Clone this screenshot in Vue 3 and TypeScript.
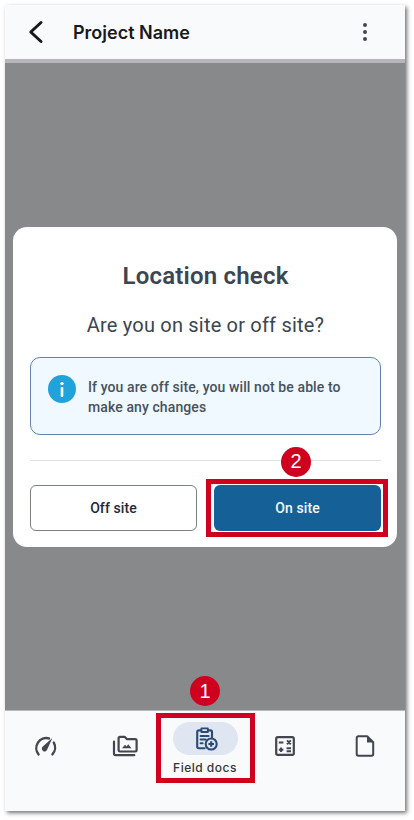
<template>
  <div class="page">
    <div class="screen">
      <header class="top-bar">
        <button class="icon-btn back" aria-label="Back">
          <svg width="24" height="24" viewBox="0 0 24 24" fill="none">
            <path d="M17 2.5 6.8 12 17 21.5" stroke="#17191c" stroke-width="3" stroke-linecap="round" stroke-linejoin="round" />
          </svg>
        </button>
        <h1 class="project">Project Name</h1>
        <button class="icon-btn more" aria-label="More">
          <span class="dot"></span><span class="dot"></span><span class="dot"></span>
        </button>
      </header>
      <div class="strip"></div>

      <main class="overlay">
        <section class="modal">
          <h2 class="modal-title">Location check</h2>
          <p class="question">Are you on site or off site?</p>
          <div class="info">
            <svg class="info-icon" width="30" height="30" viewBox="0 0 30 30">
              <circle cx="15" cy="15" r="14" fill="#22a2da" />
              <circle cx="15" cy="9.6" r="1.7" fill="#fff" />
              <rect x="13.7" y="13" width="2.6" height="10" rx="1" fill="#fff" />
            </svg>
            <p class="info-text">If you are off site, you will not be able to make any changes</p>
          </div>
          <div class="divider"></div>
          <div class="actions">
            <button class="btn secondary">Off site</button>
            <button class="btn primary">On site</button>
          </div>
          <div class="frame frame-on-site"></div>
          <span class="step step-two">2</span>
        </section>
      </main>

      <nav class="bottom-nav">
        <button v-for="item in navItems" :key="item.id" class="nav-item" :class="{ active: item.label }">
          <span class="pill">
            <svg v-if="item.id === 'gauge'" width="26" height="26" viewBox="0 0 26 26" fill="none">
              <path d="M6.6 21.4a10 10 0 0 1 10.4-16" stroke="#43454f" stroke-width="2.4" stroke-linecap="round" />
              <path d="M21.8 9.6a10 10 0 0 1-1.4 11.8" stroke="#43454f" stroke-width="2.4" stroke-linecap="round" />
              <path d="M20.4 5 15.4 16a2.8 2.8 0 1 1-4-2.9z" fill="#43454f" />
            </svg>
            <svg v-else-if="item.id === 'photos'" width="26" height="26" viewBox="0 0 26 26" fill="none">
              <path d="M2 8.5v12c0 1 .7 1.7 1.7 1.7h18.6" stroke="#43454f" stroke-width="2.2" stroke-linecap="round" />
              <path d="M6.6 5.2c0-.8.6-1.4 1.4-1.4h4.6l2.2 2.3h8.4c.8 0 1.4.6 1.4 1.4v9.6c0 .8-.6 1.4-1.4 1.4H8c-.8 0-1.4-.6-1.4-1.4z" stroke="#43454f" stroke-width="2.2" stroke-linejoin="round" />
              <path d="m10 15.2 3-3.4 1.6 1.7 1.6-2.3 3.3 4z" fill="#43454f" />
            </svg>
            <svg v-else-if="item.id === 'docs'" width="26" height="26" viewBox="0 0 26 26" fill="none">
              <path d="M12.6 22.2H6.8c-.9 0-1.6-.7-1.6-1.6V6c0-.9.7-1.6 1.6-1.6h11.6c.9 0 1.6.7 1.6 1.6v5.2" stroke="#2b4a75" stroke-width="2.1" stroke-linecap="round" />
              <path d="M9.4 2.4h6.4v3.6H9.4z" fill="#dfe5f1" stroke="#2b4a75" stroke-width="1.9" stroke-linejoin="round" />
              <path d="M8.6 10h8M8.6 13.6h5M8.6 17.2h2" stroke="#2b4a75" stroke-width="2" stroke-linecap="round" />
              <circle cx="19.2" cy="18" r="5.5" fill="#dfe5f1" stroke="#2b4a75" stroke-width="2.1" />
              <path d="M19.2 15.2v5.6M16.4 18h5.6" stroke="#2b4a75" stroke-width="2.2" />
            </svg>
            <svg v-else-if="item.id === 'calc'" width="26" height="26" viewBox="0 0 26 26" fill="none">
              <rect x="4.2" y="4.2" width="17.6" height="17.6" rx="1.6" stroke="#43454f" stroke-width="2.2" />
              <path d="M6.8 9.5h4.6M15 7.4l3.8 3.8M18.8 7.4 15 11.2M6.8 16.7h4.6M9.1 14.4V19M14.6 15.3h4.4M14.6 18.2h4.4" stroke="#43454f" stroke-width="2" />
            </svg>
            <svg v-else width="26" height="26" viewBox="0 0 26 26" fill="none">
              <path d="M6.4 3.3h8.8l6 6V21c0 1-.7 1.7-1.7 1.7H6.4c-1 0-1.7-.7-1.7-1.7V5c0-1 .7-1.7 1.7-1.7z" stroke="#43454f" stroke-width="2" stroke-linejoin="round" />
              <path d="M15 3.4v6h6.2z" fill="#43454f" />
            </svg>
          </span>
          <span v-if="item.label" class="nav-label">{{ item.label }}</span>
        </button>
        <div class="frame frame-docs"></div>
        <span class="step step-one">1</span>
      </nav>
    </div>
  </div>
</template>

<script setup lang="ts">
const navItems: { id: string; label?: string }[] = [
  { id: 'gauge' },
  { id: 'photos' },
  { id: 'docs', label: 'Field docs' },
  { id: 'calc' },
  { id: 'file' },
]
</script>

<style scoped>
.page {
  width: 414px;
  height: 820px;
  box-sizing: border-box;
  padding: 5px 9px 9px 5px;
  background: #fff;
  font-family: Roboto, "Liberation Sans", sans-serif;
}

.screen {
  height: 806px;
  display: flex;
  flex-direction: column;
  box-shadow: 2px 2px 4px rgba(0, 0, 0, 0.55);
}

.top-bar {
  height: 54px;
  flex: none;
  display: flex;
  align-items: center;
  background: #f9fafc;
}

.icon-btn {
  border: none;
  background: none;
  padding: 0;
  display: flex;
}

.back {
  margin-left: 19px;
}

.project {
  margin: 0 0 0 25px;
  flex: 1;
  font-family: Inter, sans-serif;
  font-size: 18px;
  font-weight: 600;
  color: #17191c;
}

.more {
  flex-direction: column;
  gap: 3px;
  margin-right: 38px;
}

.dot {
  width: 4px;
  height: 4px;
  border-radius: 50%;
  background: #45474f;
}

.strip {
  height: 4px;
  flex: none;
  background: #b6b6bc;
}

.overlay {
  flex: 1;
  display: flex;
  align-items: center;
  justify-content: center;
  background: #88898b;
}

.modal {
  position: relative;
  width: 384px;
  height: 320px;
  box-sizing: border-box;
  padding: 33px 16px 0 17px;
  background: #fff;
  border-radius: 14px;
}

.modal-title {
  margin: 0;
  font-size: 24px;
  line-height: 32px;
  font-weight: 600;
  letter-spacing: 0.2px;
  text-align: center;
  color: #3a4651;
}

.question {
  margin: 19px 0 0;
  font-size: 20px;
  line-height: 28px;
  letter-spacing: 0.2px;
  text-align: center;
  color: #3a4651;
}

.info {
  margin-top: 18px;
  height: 78px;
  box-sizing: border-box;
  display: flex;
  align-items: center;
  gap: 11px;
  padding: 0 16px;
  background: #f0f9ff;
  border: 1px solid #6283ad;
  border-radius: 10px;
}

.info-icon {
  flex: none;
  align-self: flex-start;
  margin-top: 16px;
}

.info-text {
  margin: 0;
  padding-top: 3px;
  font-size: 14px;
  line-height: 20px;
  font-weight: 500;
  letter-spacing: 0.1px;
  color: #46525d;
}

.divider {
  height: 1px;
  margin-top: 25px;
  background: #dfe1e3;
}

.actions {
  display: flex;
  gap: 17px;
  margin-top: 24px;
}

.btn {
  flex: none;
  width: 167px;
  height: 46px;
  border-radius: 6px;
  font-family: inherit;
  font-size: 14px;
  font-weight: 500;
  letter-spacing: 0.1px;
}

.btn.secondary {
  background: #fff;
  border: 1px solid #7b8288;
  color: #1f2933;
}

.btn.primary {
  background: #156197;
  border: none;
  color: #f3f8fc;
}

.frame {
  position: absolute;
  box-sizing: border-box;
  border: 5px solid #d0011f;
}

.frame-on-site {
  left: 193px;
  top: 252px;
  width: 182px;
  height: 58px;
}

.frame-docs {
  left: 151px;
  top: 2px;
  width: 99px;
  height: 70px;
}

.step {
  position: absolute;
  width: 30px;
  height: 30px;
  border-radius: 50%;
  display: flex;
  align-items: center;
  justify-content: center;
  background: #d0011f;
  color: #fff;
  font-family: "Liberation Sans", sans-serif;
  font-size: 20px;
}

.step-two {
  left: 268px;
  top: 220px;
}

.step-one {
  left: 185px;
  top: -35px;
}

.bottom-nav {
  position: relative;
  height: 101px;
  flex: none;
  box-sizing: border-box;
  border-top: 1px solid #b9bbbd;
  display: grid;
  grid-template-columns: 80px 80px 80px 80px 80px;
  align-items: start;
  background: #f9fafc;
  padding-top: 11px;
}

.nav-item {
  border: none;
  background: none;
  padding: 0;
  display: flex;
  flex-direction: column;
  align-items: center;
  gap: 5px;
}

.nav-item:not(.active) {
  padding-top: 7px;
}

.pill {
  width: 65px;
  height: 33px;
  border-radius: 17px;
  display: flex;
  align-items: center;
  justify-content: center;
}

.nav-item.active .pill {
  background: #dfe5f1;
}

.nav-label {
  font-family: Inter, sans-serif;
  font-size: 12px;
  font-weight: 500;
  line-height: 16px;
  letter-spacing: 0.5px;
  color: #33353a;
}
</style>
